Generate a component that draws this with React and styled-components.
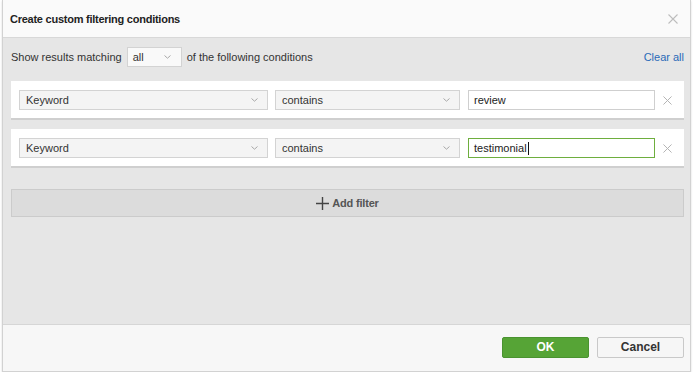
import React from "react";
import styled, { createGlobalStyle } from "styled-components";

const GlobalStyle = createGlobalStyle`
  html, body {
    margin: 0;
    background: #fff;
  }
  body {
    font-family: "Liberation Sans", Arial, sans-serif;
    font-size: 11px;
    color: #333;
  }
`;

const Dialog = styled.div`
  margin-left: 2px;
  width: 689px;
  height: 372px;
  box-sizing: border-box;
  display: flex;
  flex-direction: column;
  border: 1px solid #d2d2d2;
  border-top: none;
  box-shadow: 0 1px 2px rgba(0, 0, 0, 0.15);
`;

const Header = styled.div`
  height: 37px;
  flex: none;
  display: flex;
  align-items: center;
  justify-content: space-between;
  padding: 0 12px 0 7px;
  background: #fafafa;
  border-bottom: 1px solid #d8d8d8;
`;

const Title = styled.h1`
  margin: 0;
  font-size: 11px;
  font-weight: bold;
  letter-spacing: -0.25px;
  color: #222;
`;

const Body = styled.div`
  flex: 1;
  background: #e6e6e6;
  padding: 9px 6px 0 8px;
  display: flex;
  flex-direction: column;
`;

const MatchRow = styled.div`
  height: 20px;
  display: flex;
  align-items: center;
  gap: 5px;
  margin-bottom: 14px;
`;

const ClearAll = styled.a`
  margin-left: auto;
  color: #2a6ab8;
  text-decoration: none;
  cursor: pointer;
`;

const Select = styled.div`
  box-sizing: border-box;
  width: ${(p) => p.$width}px;
  height: 20px;
  flex: none;
  display: flex;
  align-items: center;
  justify-content: space-between;
  padding: 0 ${(p) => (p.$compact ? 10 : 9)}px 0 ${(p) => (p.$compact ? 5 : 6)}px;
  background: ${(p) => (p.$compact ? "#f9f9f9" : "#f4f4f4")};
  border: 1px solid #d3d3d3;
  color: #333;
`;

const Card = styled.div`
  background: #fff;
  border-bottom: 2px solid #cfcfcf;
  padding: 9px 12px 8px 8px;
  display: flex;
  align-items: center;
  margin-bottom: 9px;
`;

const Gap = styled.div`
  width: ${(p) => p.$w}px;
  flex: none;
`;

const Input = styled.div`
  box-sizing: border-box;
  width: 187px;
  height: 20px;
  flex: none;
  display: flex;
  align-items: center;
  padding: 0 5px;
  background: #fff;
  border: 1px solid ${(p) => (p.$focused ? "#6eae3e" : "#cfcfcf")};
  color: #222;
`;

const Caret = styled.span`
  display: inline-block;
  width: 1px;
  height: 13px;
  background: #111;
  margin-left: 1px;
`;

const Remove = styled.button`
  margin-left: auto;
  padding: 0;
  border: none;
  background: none;
  display: flex;
  cursor: pointer;
`;

const AddFilter = styled.button`
  margin-top: 12px;
  height: 28px;
  width: 100%;
  box-sizing: border-box;
  display: flex;
  align-items: center;
  justify-content: center;
  gap: 3px;
  background: #dcdcdc;
  border: 1px solid #cbcbcb;
  font-family: inherit;
  font-size: 11px;
  font-weight: bold;
  letter-spacing: -0.2px;
  color: #555;
  cursor: pointer;
`;

const Footer = styled.div`
  height: 47px;
  flex: none;
  box-sizing: border-box;
  background: #f7f7f7;
  border-top: 1px solid #d6d6d6;
  display: flex;
  align-items: center;
  justify-content: flex-end;
  gap: 8px;
  padding: 0 6px 2px 0;
`;

const Button = styled.button`
  width: 87px;
  height: 21px;
  box-sizing: border-box;
  border-radius: 2px;
  font-family: inherit;
  font-size: 12px;
  font-weight: bold;
  cursor: pointer;
  color: ${(p) => (p.$primary ? "#fff" : "#333")};
  background: ${(p) => (p.$primary ? "#56a436" : "#f6f6f6")};
  border: 1px solid ${(p) => (p.$primary ? "#4a9330" : "#c9c9c9")};
`;

const Chevron = () => (
  <svg width="7" height="4" viewBox="0 0 7 4">
    <polyline points="0.5,0.5 3.5,3.2 6.5,0.5" fill="none" stroke="#a8a8a8" strokeWidth="1" />
  </svg>
);

const Cross = ({ size = 9, color = "#b4b4b4" }) => (
  <svg width={size} height={size} viewBox="0 0 10 10">
    <path d="M0.5 0.5 L9.5 9.5 M9.5 0.5 L0.5 9.5" stroke={color} strokeWidth="1.1" />
  </svg>
);

const Plus = () => (
  <svg width="13" height="13" viewBox="0 0 13 13">
    <path d="M6.5 0 V13 M0 6.5 H13" stroke="#444" strokeWidth="1.4" />
  </svg>
);

function FilterRow({ value, focused }) {
  return (
    <Card>
      <Select $width={249}>
        Keyword <Chevron />
      </Select>
      <Gap $w={7} />
      <Select $width={185}>
        contains <Chevron />
      </Select>
      <Gap $w={8} />
      <Input $focused={focused}>
        {value}
        {focused && <Caret />}
      </Input>
      <Remove aria-label="Remove filter">
        <Cross />
      </Remove>
    </Card>
  );
}

export default function App() {
  return (
    <>
      <GlobalStyle />
      <Dialog>
        <Header>
          <Title>Create custom filtering conditions</Title>
          <Cross size={10} color="#bdbdbd" />
        </Header>
        <Body>
          <MatchRow>
            Show results matching
            <Select $width={55} $compact>
              all <Chevron />
            </Select>
            of the following conditions
            <ClearAll>Clear all</ClearAll>
          </MatchRow>
          <FilterRow value="review" />
          <FilterRow value="testimonial" focused />
          <AddFilter>
            <Plus /> Add filter
          </AddFilter>
        </Body>
        <Footer>
          <Button $primary>OK</Button>
          <Button>Cancel</Button>
        </Footer>
      </Dialog>
    </>
  );
}
